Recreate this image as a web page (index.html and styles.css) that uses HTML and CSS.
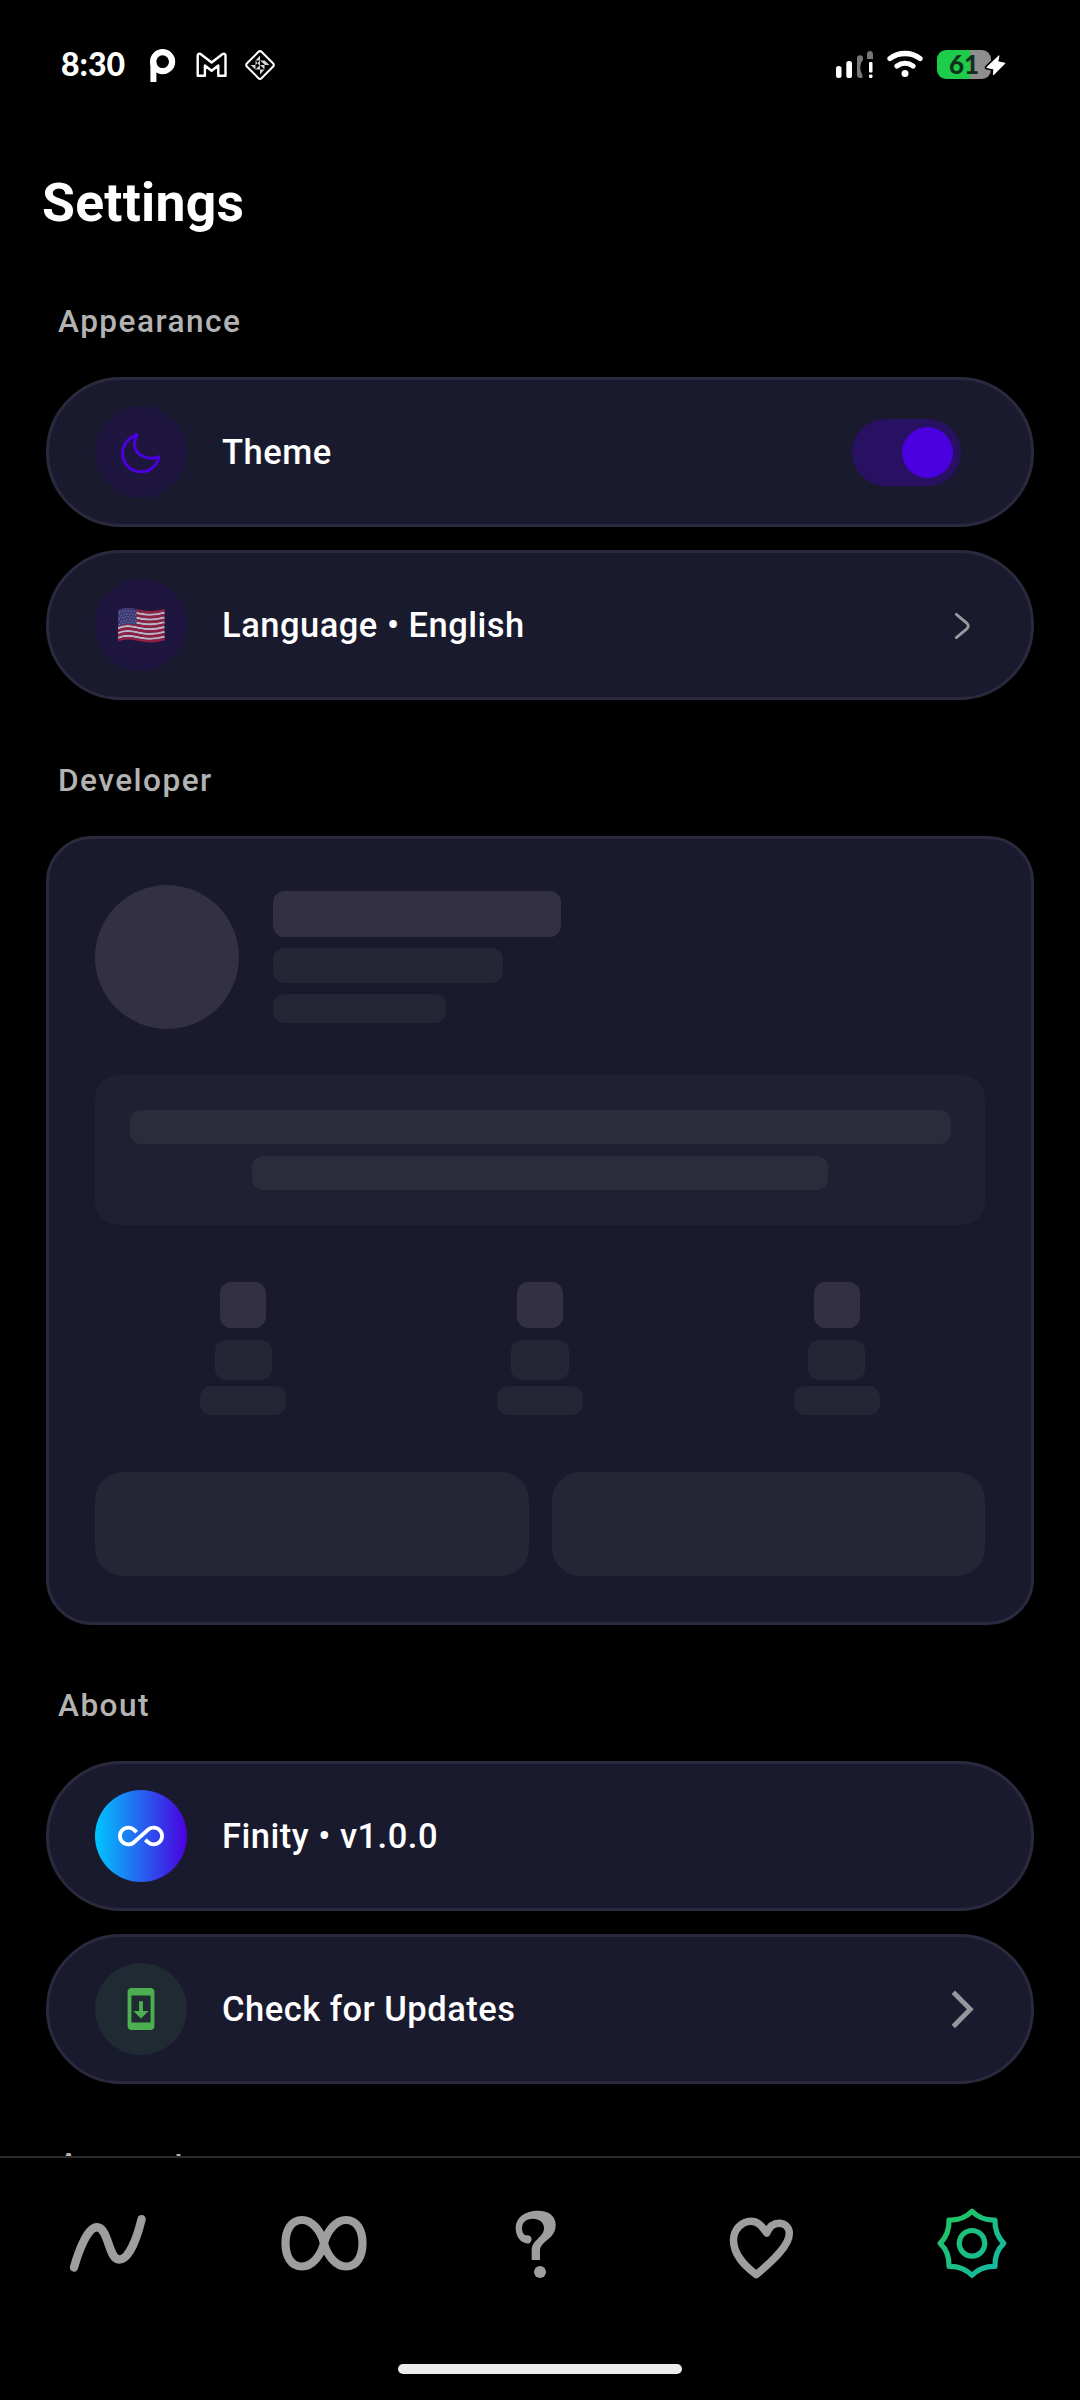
FILE: index.html
```html
<!DOCTYPE html>
<html lang="en">
<head>
<meta charset="utf-8">
<title>Settings</title>
<link rel="stylesheet" href="styles.css">
</head>
<body>
<div class="screen">
  <header class="status">
    <div class="status-left">
      <span class="clock">8:30</span>
      <svg class="st-p" width="26" height="34" viewBox="0 0 26 34"><circle cx="12.6" cy="12.7" r="9.5" fill="none" stroke="#fff" stroke-width="6.2"/><path d="M.4 12.5h6V33h-6z" fill="#fff"/></svg>
      <svg class="st-m" width="32" height="26" viewBox="0 0 32 26"><path d="M1.7 23.7V3.6c0-1.8 1.8-2.4 3.2-1.3L15.6 10.5l10.7-8.2c1.4-1.1 3.2-.5 3.2 1.3v20.1h-7.2V13.5l-6.700 5.300-6.700-5.300v10.200z" fill="none" stroke="#fff" stroke-width="2.4" stroke-linejoin="round"/></svg>
      <svg class="st-d" width="32" height="32" viewBox="-16 -16 32 32"><rect x="-10.4" y="-10.4" width="20.8" height="20.8" rx="2.5" transform="rotate(45)" fill="none" stroke="#fff" stroke-width="2"/><g id="w"><path d="M0-9.500V-4.500H-4.500zM0-4.500V0H-4.500zM0-4.500H5V0zM9.500 0H4.500V-4.500zM4.500 0H0L4.500 4.500zM0 9.500V4.500H4.500zM0 4.500V0L-4.500 4.500zM-9.500 0H-4.500V4.500zM-4.500 0H-1L-4.500-4.500z" fill="#d5d5d5"/></g></svg>
    </div>
    <div class="status-right">
      <svg class="st-sig" width="40" height="30" viewBox="0 0 40 30"><g fill="#fff"><rect x="0" y="16" width="5.5" height="12" rx="2.5"/><rect x="10.3" y="11" width="5.7" height="17" rx="2.6"/><rect x="33" y="12" width="3.5" height="10.5" rx="1"/><rect x="33" y="24.5" width="3.5" height="3.5" rx="1.2"/></g><g fill="#777"><path d="M21 8c0-3.600 6-3.600 6 0v2c-3.500 4-3.500 10-.5 15v2.700c-3 .8-5.500-.2-5.500-2.700zM31 9V4c0-4 6-4 6 0v5z"/></g></svg>
      <svg class="st-wifi" width="36" height="28" viewBox="0 0 36 28"><g fill="none" stroke="#fff" stroke-linecap="round" stroke-width="5.3"><path d="M3 8.500C11.500 1.800 24.500 1.800 33 8.500M10 16c4.800-3.600 11.200-3.600 16 0"/></g><circle cx="18" cy="23.600" r="3.500" fill="#fff"/></svg>
      <div class="battery"><span>61</span><svg width="22" height="26" viewBox="0 0 22 26"><path d="M14 3.700L1.700 15.500 9 17 8.300 23 20 11.300 12.700 9.700z" fill="#fff" stroke="#000" stroke-width="4" stroke-linejoin="round" paint-order="stroke"/><path d="M14 3.700L1.700 15.500 9 17 8.300 23 20 11.300 12.700 9.700z" fill="#fff" stroke="#fff" stroke-width="1" stroke-linejoin="round"/></svg></div>
    </div>
  </header>

  <main class="content">
    <h1>Settings</h1>

    <h2 class="first">Appearance</h2>
    <div class="row">
      <div class="badge violet"><svg width="46" height="46" viewBox="118 429 46 46"><path d="M137.300 434.500C128.500 437.500 122.500 445 122.500 453.500C122.500 463.800 130.800 471.800 141 471.800C149.500 471.800 157 466.200 159 456.800C147 461 134.500 455 134.500 443.500C134.500 440 135.500 437 137.300 434.500Z" fill="none" stroke="#4b00e0" stroke-width="3" stroke-linejoin="round"/></svg></div>
      <span class="label">Theme</span>
      <div class="toggle"><i></i></div>
    </div>
    <div class="row">
      <div class="badge violet">
        <svg class="flag" width="47" height="35" viewBox="0 0 47 35">
          <defs><path id="s" d="M0 2.500C7-.8 13 .3 22 2.300S38 3.600 46.500 1.200" fill="none" stroke-width="2.6"/></defs>
          <g stroke="#b9b4c8"><use href="#s" y="3.4"/><use href="#s" y="8.2"/><use href="#s" y="13"/><use href="#s" y="17.8"/><use href="#s" y="22.6"/><use href="#s" y="27.4"/></g>
          <g stroke="#8f2042"><use href="#s" y="1"/><use href="#s" y="5.8"/><use href="#s" y="10.6"/><use href="#s" y="15.4"/><use href="#s" y="20.2"/><use href="#s" y="25"/><use href="#s" y="29.8"/></g>
          <path d="M0 2.200C7-1 12-.1 18.500 1.200V17C12 15.500 7 15.500 0 18.700z" fill="#3d3b75"/>
          <g stroke="#8d8bb4" stroke-width="1" stroke-dasharray="1 2"><path d="M1 5C7 2 12 2.500 18 4M2.500 8C8 5 13 6 18 7M1 11C7 8 12 8.500 18 10M2.500 14C8 11 13 12 18 13M1 17C7 14 12 14 18 15.500" fill="none"/></g>
        </svg>
      </div>
      <span class="label">Language • English</span>
      <svg class="chev" width="26" height="34" viewBox="0 0 26 34"><path d="M6.300 6.300L16.500 14.800Q20 18 16.500 21.200L6.300 29.700" fill="none" stroke="#99999f" stroke-width="2.800" stroke-linecap="round"/></svg>
    </div>

    <h2>Developer</h2>
    <section class="dev">
      <div class="profile">
        <div class="avatar"></div>
        <div class="lines"><i class="bar b1"></i><i class="bar b2"></i><i class="bar b3"></i></div>
      </div>
      <div class="bio"><i class="bar full"></i><i class="bar part"></i></div>
      <div class="stats">
        <div class="stat"><i class="bar q1"></i><i class="bar q2"></i><i class="bar q3"></i></div>
        <div class="stat"><i class="bar q1"></i><i class="bar q2"></i><i class="bar q3"></i></div>
        <div class="stat"><i class="bar q1"></i><i class="bar q2"></i><i class="bar q3"></i></div>
      </div>
      <div class="actions"><i></i><i></i></div>
    </section>

    <h2>About</h2>
    <div class="row">
      <div class="badge brand"><svg width="46" height="46" viewBox="0 0 24 24"><path fill="#fff" d="M18.600 6.620c-1.440 0-2.800.56-3.770 1.530L12 10.660 10.480 12h.01L7.800 14.390c-.64.64-1.490.99-2.400.99-1.870 0-3.390-1.510-3.390-3.380S3.530 8.620 5.400 8.620c.91 0 1.760.35 2.440 1.030l1.130 1 1.510-1.340L9.220 8.200C8.200 7.180 6.840 6.620 5.400 6.620 2.420 6.620 0 9.040 0 12s2.420 5.380 5.400 5.380c1.440 0 2.800-.56 3.770-1.530l2.830-2.500.01.01L13.520 12h-.01l2.690-2.390c.64-.64 1.490-.99 2.400-.99 1.870 0 3.390 1.510 3.390 3.380s-1.520 3.380-3.390 3.380c-.9 0-1.760-.35-2.440-1.030l-1.140-1.010-1.510 1.340 1.270 1.120c1.020 1.010 2.370 1.570 3.820 1.570 2.980 0 5.400-2.410 5.400-5.380s-2.420-5.370-5.400-5.370z"/></svg></div>
      <span class="label">Finity • v1.0.0</span>
    </div>
    <div class="row">
      <div class="badge green"><svg width="46" height="46" viewBox="0 0 24 24"><path fill="#4caf50" d="M17 1.010L7 1c-1.100 0-2 .9-2 2v18c0 1.100.9 2 2 2h10c1.100 0 2-.9 2-2V3c0-1.100-.9-1.990-2-1.990zM17 19H7V5h10v14zm-1-6h-3V8h-2v5H8l4 4 4-4z"/></svg></div>
      <span class="label">Check for Updates</span>
      <svg class="chev" width="26" height="42" viewBox="0 0 26 42"><path d="M3.300 4.200L20.300 21.300 3.300 38.500" fill="none" stroke="#96969c" stroke-width="4.800"/></svg>
    </div>

    <h2>Account</h2>
  </main>

  <nav class="tabs">
    <svg width="80" height="80" viewBox="0 0 80 80"><path d="M6 64.500C11 46.500 20 24.300 28.800 24.300C41 24.300 40 56.500 51.200 56.500C61 56.500 69 35 73.600 16.200" fill="none" stroke="#9e9e9e" stroke-width="8.400" stroke-linecap="round"/></svg>
    <svg width="88" height="80" viewBox="-44 -40 88 80"><path d="M0 .3C-3-12-12-23-22-23C-33-23-38.500-12.500-38.500.3S-33 23.500-22 23.500C-12 23.500-3 12.500 0 .3C3-12 12-23 22-23C33-23 38.500-12.500 38.500.3S33 23.500 22 23.500C12 23.500 3 12.500 0 .3Z" fill="none" stroke="#9e9e9e" stroke-width="8.200"/></svg>
    <svg width="80" height="80" viewBox="30 39 240 240"><g fill="#9e9e9e"><path d="M125 210V180C125 150 162 142 162 114C162 97 148 86 128 86C108 86 96 98 96 114C96 127 102 136 109 136A12.500 12.500 0 1 1 109 160C92 158 77 140 77 115C77 82 105 62 144 62C176 62 197 77 197 105C197 150 150 150 150 184V210Z"/><circle cx="150" cy="246" r="18"/></g></svg>
    <svg width="80" height="80" viewBox="-40 -40 80 80"><path d="M10.700-10C5-18.500 1-21.700-5-21.700C-14-21.700-22.500-13.500-22.500-3C-22.500 11-13 21.500.2 31.600C16 18.500 33.300 3 33.300-9.500C33.300-15.500 29-19.800 23-19.800C16.500-19.800 13-15.500 10.700-10Z" fill="none" stroke="#9e9e9e" stroke-width="7.500" stroke-linejoin="round"/></svg>
    <svg width="80" height="80" viewBox="-40 -40 80 80"><defs><linearGradient id="g" gradientUnits="userSpaceOnUse" x1="-30" y1="-30" x2="30" y2="30"><stop offset="0" stop-color="#22c55e"/><stop offset="1" stop-color="#14b8a6"/></linearGradient></defs><g fill="none" stroke="url(#g)" stroke-width="5.200" stroke-linejoin="round"><path d="M0-31.800Q9-22.500 23-23Q22.500-9 31.800.3Q22.500 9 23 23.300Q9 23 0 32.300Q-9 23-23 23.300Q-22.500 9-31.800.3Q-22.500-9-23-23Q-9-22.500 0-31.800Z"/><circle cx="0" cy=".3" r="12.800"/></g></svg>
  </nav>
  <div class="home"></div>
</div>
</body>
</html>
```
FILE: styles.css
```css
* { box-sizing: border-box; margin: 0; padding: 0; }
body { background: #000; font-family: Roboto, "Liberation Sans", sans-serif; color: #fff; }
svg, i { display: block; }
.screen { width: 1080px; height: 2400px; display: flex; flex-direction: column; background: #000; overflow: hidden; }

.status { height: 130px; flex: none; display: flex; justify-content: space-between; padding: 0 74px 0 61px; }
.status-left, .status-right { display: flex; align-items: flex-start; }
.clock { font: 900 32px/40px Lato, sans-serif; margin-top: 44px; width: 89px; }
.st-p { margin-top: 49px; }
.st-m { margin: 52px 0 0 20px; }
.st-d { margin: 49px 0 0 16px; }
.st-sig { margin-top: 50px; }
.st-wifi { margin: 50px 0 0 11px; }
.battery { position: relative; width: 54px; height: 29px; margin: 50px 15px 0 14px; border-radius: 9px; background: linear-gradient(90deg, #1ccc4a 33px, #8e8e8e 33px); }
.battery span { display: block; width: 54px; text-align: center; font: 900 26px/29px Lato, sans-serif; color: #10301a; }
.battery svg { position: absolute; left: 48px; top: 2px; overflow: visible; }

.content { height: 2026px; flex: none; display: flex; flex-direction: column; padding: 0 46px; overflow: hidden; }
.content > * { flex-shrink: 0; }
h1 { font-size: 53.500px; line-height: 61px; font-weight: 700; letter-spacing: .25px; margin: 42px 0 0 -4px; height: 60px; }
h2 { font-size: 31.600px; line-height: 40px; height: 40px; font-weight: 500; color: #b3b3b3; letter-spacing: 1.450px; margin: 38px 0 35px 12px; }
h2.first { margin-top: 70px; }
.row { height: 150px; display: flex; align-items: center; padding: 0 46px; background: #1a1a2e; border: 3px solid #2b293d; border-radius: 75px; margin-bottom: 23px; }
.badge { width: 92px; height: 92px; border-radius: 50%; display: flex; align-items: center; justify-content: center; margin-right: 35px; }
.violet { background: #1f163f; }
.brand { background: linear-gradient(90deg, #00c6ff, #4b00e0); }
.green { background: #1f2a33; }
.label { font-size: 34.500px; line-height: 44px; font-weight: 500; letter-spacing: .5px; flex: 1; }
.toggle { width: 109px; height: 67px; border-radius: 34px; background: #281162; padding: 8px; margin-right: 24px; }
.toggle i { width: 51px; height: 51px; border-radius: 50%; background: #4b00e0; margin-left: auto; }
.chev { margin-right: 9px; }

.dev { height: 789px; margin-bottom: 23px; background: #1a1a2e; border: 3px solid #2b293d; border-radius: 46px; padding: 46px; }
.profile { display: flex; gap: 34px; align-items: center; height: 144px; }
.avatar { width: 144px; height: 144px; border-radius: 50%; background: #323042; }
.lines { display: flex; flex-direction: column; gap: 11.500px; }
.bar { border-radius: 11.500px; background: #252536; }
.b1 { width: 288px; height: 46px; background: #323042; }
.b2 { width: 230px; height: 34.500px; }
.b3 { width: 173px; height: 29px; }
.bio { height: 150px; margin-top: 46px; border-radius: 23px; background: #202033; padding: 34.500px; display: flex; flex-direction: column; align-items: center; gap: 11.500px; }
.bio .bar { height: 34.500px; background: #2b2b3c; }
.full { width: 821px; }
.part { width: 576px; }
.stats { display: flex; margin-top: 57px; }
.stat { flex: 1; display: flex; flex-direction: column; align-items: center; }
.q1 { width: 46px; height: 46px; background: #323042; margin-bottom: 11.500px; }
.q2 { width: 57.500px; height: 40px; margin-bottom: 6px; }
.q3 { width: 86px; height: 29px; }
.actions { display: flex; gap: 23px; margin-top: 57.500px; }
.actions i { flex: 1; height: 103.500px; border-radius: 28px; background: #252536; }

.tabs { height: 200px; flex: none; border-top: 2px solid #2a2a2a; display: grid; grid-template-columns: repeat(5, 216px); justify-items: center; padding-top: 45px; }
.home { width: 284px; height: 10px; border-radius: 5px; background: #ececec; margin: 8px auto 0; }
```
